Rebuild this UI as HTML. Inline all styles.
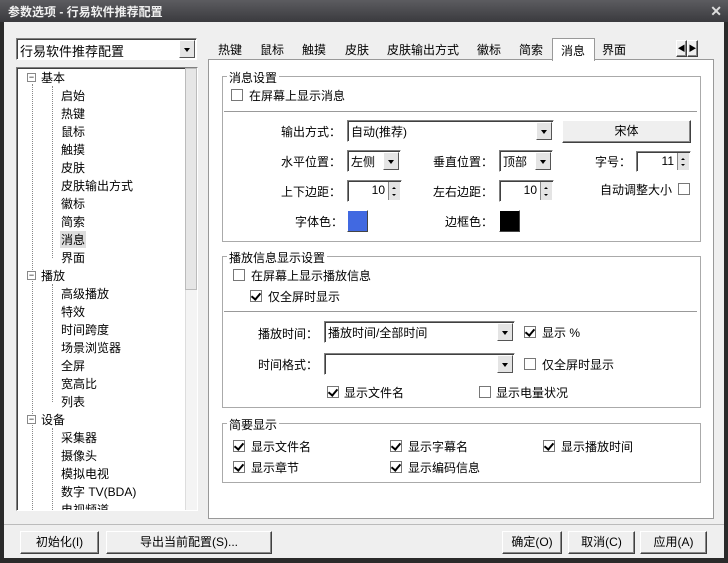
<!DOCTYPE html>
<html><head><meta charset="utf-8"><style>
*{margin:0;padding:0;box-sizing:border-box}
body{width:728px;height:563px;overflow:hidden;background:#2a2a2a;font:12px "Liberation Sans","Noto Sans CJK SC",sans-serif;color:#000;position:relative}
.a{position:absolute;white-space:nowrap}
.frame{left:4px;top:22px;width:720px;height:536px;background:#efefef}
.title{left:0;top:0;width:728px;height:22px;background:linear-gradient(#5c5c60,#3a3a3e);color:#f0f0f0;font-weight:bold;font-size:12px;padding:3px 8px}
.sunk{background:#fff;border:1px solid;border-color:#808080 #fff #fff #808080;box-shadow:inset 1px 1px 0 #404040}
.btn{background:#efefef;border:1px solid;border-color:#fff #404040 #404040 #fff;box-shadow:inset -1px -1px 0 #888;text-align:center;line-height:20px}
.dd{position:absolute;right:1px;top:1px;bottom:1px;width:16px;background:#e4e4e4;border:1px solid;border-color:#fff #555 #555 #fff}
.dd:after{content:"";position:absolute;left:4px;top:7px;border:3px solid transparent;border-top:4px solid #000}
.grp{border:1px solid #a0a0a0;box-shadow:1px 1px 0 #fff}
.gl{background:#fff;padding:0 2px;top:-8px;left:4px;position:absolute}
.cb{position:absolute;width:12px;height:12px;border:1px solid #777;background:#fff}
.cb.c:after{content:"";position:absolute;left:2px;top:0px;width:4px;height:7px;border:solid #000;border-width:0 2px 2px 0;transform:rotate(40deg)}
.sp{position:absolute;right:1px;top:1px;bottom:1px;width:12px;background:#e4e4e4;border-left:1px solid #888}
.sp:before{content:"";position:absolute;left:3px;top:3px;border:2px solid transparent;border-bottom:2px solid #000}
.sp:after{content:"";position:absolute;left:3px;bottom:2px;border:2px solid transparent;border-top:2px solid #000}
.t{position:absolute;font-size:12px}
.ln{position:absolute;border-left:1px dotted #888}
.hl{position:absolute;border-top:1px dotted #888;width:10px}
.pm{position:absolute;width:9px;height:9px;border:1px solid #888;background:#fff;font-size:9px;line-height:6px;text-align:center}
</style></head><body>
<div class="a title">参数选项 - 行易软件推荐配置</div>
<div class="a" style="right:6px;top:3px;color:#ddd;font-weight:bold;font-size:14px">✕</div>
<div class="a frame"></div>
<div class="a" style="left:4px;top:524px;width:720px;height:1px;background:#bbb"></div>

<div class="a sunk" style="left:16px;top:38px;width:181px;height:22px;padding:2px 3px;font-size:13px">行易软件推荐配置<div class="dd"></div></div>

<div class="a sunk" style="left:16px;top:67px;width:182px;height:444px;overflow:hidden">
<div class="a" style="right:0;top:0;width:12px;height:443px;background:#f4f4f4;border-left:1px solid #ddd"></div>
<div class="a" style="right:0;top:0;width:12px;height:222px;background:#e6e6e6;border:1px solid #bbb"></div>
<div class="ln" style="left:15px;top:16px;height:430px"></div>
<div class="ln" style="left:35px;top:18px;height:172px"></div>
<div class="ln" style="left:35px;top:216px;height:118px"></div>
<div class="ln" style="left:35px;top:360px;height:90px"></div>
</div>
<div id="tree"></div>

<div class="a" style="left:208px;top:59px;width:506px;height:460px;background:#fff;border:1px solid #999"></div>
<div class="a" style="left:218px;top:41px">热键</div>
<div class="a" style="left:260px;top:41px">鼠标</div>
<div class="a" style="left:302px;top:41px">触摸</div>
<div class="a" style="left:345px;top:41px">皮肤</div>
<div class="a" style="left:387px;top:41px">皮肤输出方式</div>
<div class="a" style="left:477px;top:41px">徽标</div>
<div class="a" style="left:519px;top:41px">简索</div>
<div class="a" style="left:552px;top:38px;width:43px;height:23px;background:#fff;border:1px solid #999;border-bottom:none;padding:3px 8px">消息</div>
<div class="a" style="left:602px;top:41px">界面</div>
<div class="a btn" style="left:676px;top:40px;width:11px;height:17px;font-size:8px;line-height:15px">◀</div>
<div class="a btn" style="left:687px;top:40px;width:11px;height:17px;font-size:8px;line-height:15px">▶</div>

<!-- group 1 -->
<div class="a" style="left:222px;top:76px;width:479px;height:166px;border:1px solid #aaa"><span class="gl">消息设置</span></div>
<div class="cb" style="left:231px;top:89px"></div><div class="t" style="left:249px;top:87px">在屏幕上显示消息</div>
<div class="a" style="left:224px;top:111px;width:473px;height:1px;background:#999"></div>
<div class="t" style="left:281px;top:123px">输出方式：</div>
<div class="a sunk" style="left:347px;top:120px;width:207px;height:22px;padding:2px 3px">自动(推荐)<div class="dd"></div></div>
<div class="a btn" style="left:562px;top:120px;width:129px;height:23px">宋体</div>
<div class="t" style="left:281px;top:153px">水平位置：</div>
<div class="a sunk" style="left:347px;top:150px;width:54px;height:22px;padding:2px 3px">左侧<div class="dd"></div></div>
<div class="t" style="left:433px;top:153px">垂直位置：</div>
<div class="a sunk" style="left:499px;top:150px;width:54px;height:22px;padding:2px 3px">顶部<div class="dd"></div></div>
<div class="t" style="left:595px;top:153px">字号：</div>
<div class="a sunk" style="left:636px;top:151px;width:55px;height:21px;text-align:right;padding:2px 16px 0 0">11<div class="sp"></div></div>
<div class="t" style="left:281px;top:183px">上下边距：</div>
<div class="a sunk" style="left:347px;top:180px;width:55px;height:22px;text-align:right;padding:2px 16px 0 0">10<div class="sp"></div></div>
<div class="t" style="left:433px;top:183px">左右边距：</div>
<div class="a sunk" style="left:499px;top:180px;width:55px;height:22px;text-align:right;padding:2px 16px 0 0">10<div class="sp"></div></div>
<div class="t" style="left:600px;top:181px">自动调整大小</div>
<div class="cb" style="left:678px;top:183px"></div>
<div class="t" style="left:295px;top:213px">字体色：</div>
<div class="a" style="left:347px;top:210px;width:21px;height:22px;background:#4169e1;border:1px solid;border-color:#fff #444 #444 #fff"></div>
<div class="t" style="left:445px;top:213px">边框色：</div>
<div class="a" style="left:499px;top:210px;width:21px;height:22px;background:#000;border:1px solid;border-color:#fff #444 #444 #fff"></div>

<!-- group 2 -->
<div class="a" style="left:222px;top:256px;width:479px;height:152px;border:1px solid #aaa"><span class="gl">播放信息显示设置</span></div>
<div class="cb" style="left:233px;top:269px"></div><div class="t" style="left:251px;top:267px">在屏幕上显示播放信息</div>
<div class="cb c" style="left:250px;top:290px"></div><div class="t" style="left:268px;top:288px">仅全屏时显示</div>
<div class="a" style="left:224px;top:311px;width:473px;height:1px;background:#999"></div>
<div class="t" style="left:258px;top:325px">播放时间：</div>
<div class="a sunk" style="left:324px;top:321px;width:191px;height:22px;padding:2px 3px">播放时间/全部时间<div class="dd"></div></div>
<div class="cb c" style="left:524px;top:326px"></div><div class="t" style="left:542px;top:324px">显示 %</div>
<div class="t" style="left:258px;top:356px">时间格式：</div>
<div class="a sunk" style="left:324px;top:353px;width:191px;height:22px"><div class="dd"></div></div>
<div class="cb" style="left:524px;top:358px"></div><div class="t" style="left:542px;top:356px">仅全屏时显示</div>
<div class="cb c" style="left:327px;top:386px"></div><div class="t" style="left:344px;top:384px">显示文件名</div>
<div class="cb" style="left:479px;top:386px"></div><div class="t" style="left:496px;top:384px">显示电量状况</div>

<!-- group 3 -->
<div class="a" style="left:222px;top:423px;width:479px;height:60px;border:1px solid #aaa"><span class="gl">简要显示</span></div>
<div class="cb c" style="left:233px;top:440px"></div><div class="t" style="left:251px;top:438px">显示文件名</div>
<div class="cb c" style="left:390px;top:440px"></div><div class="t" style="left:408px;top:438px">显示字幕名</div>
<div class="cb c" style="left:543px;top:440px"></div><div class="t" style="left:561px;top:438px">显示播放时间</div>
<div class="cb c" style="left:233px;top:461px"></div><div class="t" style="left:251px;top:459px">显示章节</div>
<div class="cb c" style="left:390px;top:461px"></div><div class="t" style="left:408px;top:459px">显示编码信息</div>

<div class="a btn" style="left:20px;top:531px;width:79px;height:23px">初始化(I)</div>
<div class="a btn" style="left:106px;top:531px;width:166px;height:23px">导出当前配置(S)...</div>
<div class="a btn" style="left:502px;top:531px;width:60px;height:23px">确定(O)</div>
<div class="a btn" style="left:568px;top:531px;width:67px;height:23px">取消(C)</div>
<div class="a btn" style="left:640px;top:531px;width:67px;height:23px">应用(A)</div>

<!-- tree items -->
<div class="pm" style="left:27px;top:73px">−</div><div class="t" style="left:41px;top:69px">基本</div>
<div class="t" style="left:61px;top:87px">启始</div>
<div class="t" style="left:61px;top:105px">热键</div>
<div class="t" style="left:61px;top:123px">鼠标</div>
<div class="t" style="left:61px;top:141px">触摸</div>
<div class="t" style="left:61px;top:159px">皮肤</div>
<div class="t" style="left:61px;top:177px">皮肤输出方式</div>
<div class="t" style="left:61px;top:195px">徽标</div>
<div class="t" style="left:61px;top:213px">简索</div>
<div class="t" style="left:60px;top:231px;background:#ddd;padding:0 1px">消息</div>
<div class="t" style="left:61px;top:249px">界面</div>
<div class="pm" style="left:27px;top:271px">−</div><div class="t" style="left:41px;top:267px">播放</div>
<div class="t" style="left:61px;top:285px">高级播放</div>
<div class="t" style="left:61px;top:303px">特效</div>
<div class="t" style="left:61px;top:321px">时间跨度</div>
<div class="t" style="left:61px;top:339px">场景浏览器</div>
<div class="t" style="left:61px;top:357px">全屏</div>
<div class="t" style="left:61px;top:375px">宽高比</div>
<div class="t" style="left:61px;top:393px">列表</div>
<div class="pm" style="left:27px;top:415px">−</div><div class="t" style="left:41px;top:411px">设备</div>
<div class="t" style="left:61px;top:429px">采集器</div>
<div class="t" style="left:61px;top:447px">摄像头</div>
<div class="t" style="left:61px;top:465px">模拟电视</div>
<div class="t" style="left:61px;top:483px">数字 TV(BDA)</div>
<div class="a" style="left:17px;top:501px;width:166px;height:9px;overflow:hidden"><div class="t" style="left:44px;top:0px">电视频道</div></div>
</body></html>
